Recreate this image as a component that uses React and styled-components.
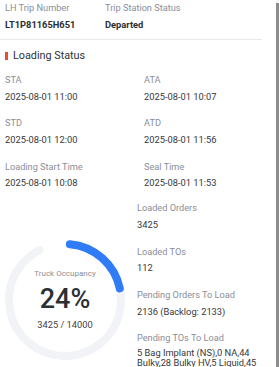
import React from "react";
import styled, { createGlobalStyle } from "styled-components";

const GlobalStyle = createGlobalStyle`
  html, body {
    margin: 0;
    padding: 0;
    background: #ffffff;
  }
  body {
    font-family: Roboto, "Liberation Sans", Arial, sans-serif;
    -webkit-font-smoothing: antialiased;
  }
`;

/**
 * Outer frame: the scrolling panel plus its thin scrollbar rail.
 */
const Frame = styled.div`
  display: flex;
  width: 279px;
  height: 367px;
  overflow: hidden;
  background: #ffffff;
`;

const Panel = styled.div`
  flex: 1;
  min-width: 0;
  overflow: hidden;
`;

const ScrollRail = styled.div`
  width: 3px;
  display: flex;
  flex-direction: column;
  background: #f4f4f4;
`;

const ScrollThumb = styled.div`
  flex: 1;
  margin-top: 3px;
  background: #8c8c8c;
`;

const Header = styled.div`
  width: 257px;
  display: grid;
  grid-template-columns: 100px 1fr;
  padding: 2px 0 9px 5px;
  border-bottom: 1px solid #e9eaec;
`;

const Field = styled.div`
  display: flex;
  flex-direction: column;
  gap: ${(p) => (p.$tight ? "4.5px" : "5.7px")};
`;

const Label = styled.div`
  font-size: 9.2px;
  line-height: 11px;
  color: #8a8e98;
  white-space: nowrap;
`;

const Value = styled.div`
  font-size: 9.3px;
  line-height: ${(p) => (p.$multi ? "10.7px" : "11px")};
  color: ${(p) => (p.$bold ? "#2b2d31" : "#35383d")};
  font-weight: ${(p) => (p.$bold ? 700 : 400)};
`;

const SectionTitle = styled.div`
  display: flex;
  align-items: center;
  gap: 5.3px;
  margin-top: 9px;
  padding-left: 5px;
  font-size: 10.8px;
  line-height: 14px;
  color: #303236;

  &::before {
    content: "";
    width: 2.7px;
    height: 8px;
    background: #ee4d2d;
  }
`;

const TimeGrid = styled.div`
  display: grid;
  grid-template-columns: 139px 1fr;
  row-gap: 15.6px;
  margin-top: 11.5px;
  padding-left: 5px;
`;

const BottomSection = styled.div`
  display: grid;
  grid-template-columns: 132px 1fr;
  margin-top: 14px;
  padding-left: 5px;
`;

const StatList = styled.div`
  display: flex;
  flex-direction: column;
  gap: 15.6px;
  width: 125px;
`;

const Gauge = styled.div`
  display: grid;
  width: 120px;
  height: 120px;
  margin-top: 37.5px;

  & > * {
    grid-area: 1 / 1;
  }
`;

const GaugeText = styled.div`
  display: flex;
  flex-direction: column;
  align-items: center;
  padding-top: 29px;
`;

const GaugeCaption = styled.div`
  font-size: 8px;
  line-height: 10px;
  color: #8a8e98;
`;

const GaugePercent = styled.div`
  margin-top: 6px;
  font-size: 27px;
  line-height: 28px;
  font-weight: 500;
  color: #2b2f36;
`;

const GaugeCount = styled.div`
  margin-top: 6.5px;
  font-size: 9.3px;
  line-height: 11px;
  color: #3f4247;
`;

const polar = (r, deg) => {
  const a = (deg * Math.PI) / 180;
  return [60 + r * Math.sin(a), 60 - r * Math.cos(a)];
};

const arcPath = (r, from, to) => {
  const [x0, y0] = polar(r, from);
  const [x1, y1] = polar(r, to);
  const large = to - from > 180 ? 1 : 0;
  return `M ${x0.toFixed(2)} ${y0.toFixed(2)} A ${r} ${r} 0 ${large} 1 ${x1.toFixed(2)} ${y1.toFixed(2)}`;
};

const OccupancyGauge = ({ percent, loaded, total }) => (
  <Gauge>
    <svg width="120" height="120" viewBox="0 0 120 120">
      <path
        d={arcPath(56, 5, 333)}
        fill="none"
        stroke="#f1f3f6"
        strokeWidth="8"
        strokeLinecap="round"
      />
      <path
        d={arcPath(56, 5, 78)}
        fill="none"
        stroke="#2f7cf6"
        strokeWidth="8"
        strokeLinecap="round"
      />
    </svg>
    <GaugeText>
      <GaugeCaption>Truck Occupancy</GaugeCaption>
      <GaugePercent>{percent}%</GaugePercent>
      <GaugeCount>
        {loaded} / {total}
      </GaugeCount>
    </GaugeText>
  </Gauge>
);

const times = [
  ["STA", "2025-08-01 11:00"],
  ["ATA", "2025-08-01 10:07"],
  ["STD", "2025-08-01 12:00"],
  ["ATD", "2025-08-01 11:56"],
  ["Loading Start Time", "2025-08-01 10:08"],
  ["Seal Time", "2025-08-01 11:53"],
];

const stats = [
  ["Loaded Orders", "3425"],
  ["Loaded TOs", "112"],
  ["Pending Orders To Load", "2136 (Backlog: 2133)"],
  ["Pending TOs To Load", "5 Bag Implant (NS),0 NA,44 Bulky,28 Bulky HV,5 Liquid,45"],
];

const App = () => (
  <>
    <GlobalStyle />
    <Frame>
      <Panel>
        <Header>
          <Field>
            <Label>LH Trip Number</Label>
            <Value $bold>LT1P81165H651</Value>
          </Field>
          <Field>
            <Label>Trip Station Status</Label>
            <Value $bold>Departed</Value>
          </Field>
        </Header>

        <SectionTitle>Loading Status</SectionTitle>

        <TimeGrid>
          {times.map(([label, value]) => (
            <Field key={label}>
              <Label>{label}</Label>
              <Value>{value}</Value>
            </Field>
          ))}
        </TimeGrid>

        <BottomSection>
          <div>
            <OccupancyGauge percent={24} loaded={3425} total={14000} />
          </div>
          <StatList>
            {stats.map(([label, value], i) => (
              <Field key={label} $tight={i === stats.length - 1}>
                <Label>{label}</Label>
                <Value $multi={i === stats.length - 1}>{value}</Value>
              </Field>
            ))}
          </StatList>
        </BottomSection>
      </Panel>
      <ScrollRail>
        <ScrollThumb />
      </ScrollRail>
    </Frame>
  </>
);

export default App;
